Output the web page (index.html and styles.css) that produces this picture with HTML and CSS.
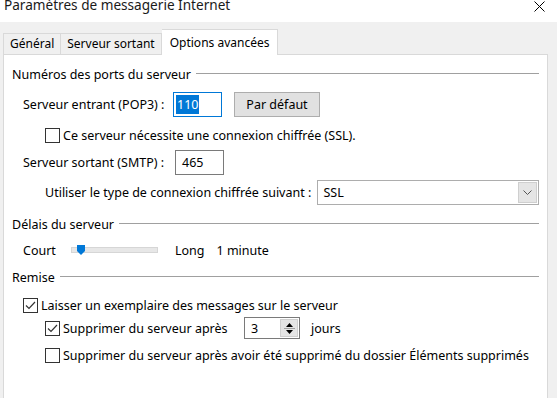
FILE: index.html
```html
<!DOCTYPE html>
<html lang="fr">
<head>
<meta charset="utf-8"/>
<meta content="width=device-width, initial-scale=1.0" name="viewport"/>
<title>Paramètres de messagerie Internet</title>
<link rel="stylesheet" href="styles.css">
</head>
<body>
<div class="titlebar">
  <span class="title">Paramètres de messagerie Internet</span>
  <svg class="close" width="11" height="11" viewBox="0 0 11 11"><path d="M0.5 0.5 L10.5 10.5 M10.5 0.5 L0.5 10.5" stroke="#000" stroke-width="1"/></svg>
</div>
<div class="dialog">
  <div class="tabs">
    <div class="tab first">Général</div>
    <div class="tab">Serveur sortant</div>
    <div class="tab active">Options avancées</div>
  </div>
  <div class="panel">
    <div class="legend legend-ports"><span>Numéros des ports du serveur</span><i></i></div>

    <div class="row row-pop">
      <span class="lbl lbl-pop">Serveur entrant (POP3) :</span>
      <span class="field focused"><span class="sel">110</span></span>
      <button class="btn">Par défaut</button>
    </div>

    <label class="check row-ssl">
      <span class="box"></span>Ce serveur nécessite une connexion chiffrée (SSL).
    </label>

    <div class="row row-smtp">
      <span class="lbl lbl-smtp">Serveur sortant (SMTP) :</span>
      <span class="field">465</span>
    </div>

    <div class="row row-enc">
      <span class="lbl lbl-enc">Utiliser le type de connexion chiffrée suivant :</span>
      <span class="select">
        <span class="select-value">SSL</span>
        <span class="select-btn"><svg width="9" height="5" viewBox="0 0 9 5"><path d="M0.5 0.5 L4.5 4.5 L8.5 0.5" fill="none" stroke="#555" stroke-width="1"/></svg></span>
      </span>
    </div>

    <div class="legend legend-delay"><span>Délais du serveur</span><i></i></div>

    <div class="row row-slider">
      <span class="lbl lbl-court">Court</span>
      <span class="slider">
        <span class="track"></span>
        <svg class="thumb" width="8" height="10" viewBox="0 0 8 10"><path d="M0 0 H8 V6 L4 10 L0 6 Z" fill="#0078d7"/></svg>
      </span>
      <span class="lbl-long">Long</span>
      <span>1 minute</span>
    </div>

    <div class="legend legend-remise"><span>Remise</span><i></i></div>

    <label class="check row-keep">
      <span class="box checked"><svg width="13" height="13" viewBox="0 0 13 13"><path d="M2 6.5 L5 9.5 L11 3" fill="none" stroke="#333" stroke-width="1.2"/></svg></span>Laisser un exemplaire des messages sur le serveur
    </label>

    <div class="check row-delete">
      <span class="box checked"><svg width="13" height="13" viewBox="0 0 13 13"><path d="M2 6.5 L5 9.5 L11 3" fill="none" stroke="#333" stroke-width="1.2"/></svg></span>
      <span class="lbl-delete">Supprimer du serveur après</span>
      <span class="spin">
        <span class="spin-value">3</span>
        <span class="spin-btns">
          <svg width="13" height="17" viewBox="0 0 13 17"><path d="M3 7 L6.5 3 L10 7 Z M3 10 L6.5 14 L10 10 Z" fill="#000"/><path d="M1 8.5 H12" stroke="#a0a0a0" stroke-width="1"/></svg>
        </span>
      </span>
      <span class="lbl-days">jours</span>
    </div>

    <label class="check row-deleted">
      <span class="box"></span>Supprimer du serveur après avoir été supprimé du dossier Éléments supprimés
    </label>
  </div>
</div>
</body>
</html>
```

FILE: styles.css
```css
body {
  font-family: "Noto Sans", "Open Sans", sans-serif;
  font-size: 12.5px;
  margin: 0;
  background: #f0f0f0;
  color: #000;
  overflow: hidden;
}
.titlebar {
  height: 22px;
  background: #fff;
  position: relative;
  overflow: hidden;
}
.title {
  display: block;
  font-size: 13.6px;
  line-height: 18px;
  margin-top: -4px;
  padding-left: 4px;
  color: #1a1a1a;
}
.close {
  position: absolute;
  right: 12px;
  top: 1px;
}
.dialog {
  height: 376px;
  background: #f0f0f0;
  padding-top: 7px;
}
.tabs {
  display: flex;
  align-items: flex-end;
  padding-left: 3px;
  height: 25px;
  font-size: 12px;
}
.tab {
  height: 21px;
  line-height: 20px;
  padding: 0 6px;
  border: 1px solid #d9d9d9;
  border-bottom: none;
  border-left: none;
  box-sizing: border-box;
  background: #f0f0f0;
}
.tab.first {
  border-left: 1px solid #d9d9d9;
}
.tab.active {
  height: 26px;
  line-height: 26px;
  background: #fff;
  padding: 0 8px;
  border-left: none;
  margin-bottom: -1px;
  position: relative;
  z-index: 1;
}
.panel {
  margin-left: 3px;
  width: 545px;
  height: 360px;
  box-sizing: border-box;
  background: #fff;
  border: 1px solid #d9d9d9;
  padding: 9px 8px 0 8px;
}
.legend {
  display: flex;
  align-items: center;
  height: 20px;
}
.legend i {
  flex: 1;
  height: 1px;
  background: #a0a0a0;
  margin-left: 5px;
  margin-top: -1px;
}
.row {
  display: flex;
  align-items: center;
  height: 25px;
  padding-left: 11px;
}
.lbl-pop { width: 150px; }
.lbl-smtp { width: 152px; }
.lbl-enc { width: 295px; padding-left: 22px; box-sizing: border-box; white-space: nowrap; }
.field {
  display: inline-flex;
  align-items: center;
  box-sizing: border-box;
  width: 49px;
  height: 25px;
  border: 1px solid #7a7a7a;
  padding-left: 6px;
  background: #fff;
}
.field.focused {
  border-color: #0078d7;
  padding-left: 2px;
}
.sel {
  background: #0078d7;
  color: #fff;
  line-height: 19px;
  padding: 0 1px;
}
.btn {
  font: inherit;
  margin-left: 12px;
  width: 86px;
  height: 25px;
  background: #e1e1e1;
  border: 1px solid #adadad;
  color: #000;
  padding: 0;
}
.check {
  display: flex;
  align-items: center;
  height: 18px;
  white-space: nowrap;
}
.box {
  width: 15px;
  height: 15px;
  box-sizing: border-box;
  border: 1px solid #333;
  background: #fff;
  margin-right: 3px;
  display: inline-flex;
  align-items: center;
  justify-content: center;
  flex: none;
}
.row-pop { margin-top: 8px; }
.row-ssl { margin-top: 9px; padding-left: 33px; }
.row-smtp { margin-top: 6px; }
.row-enc { margin-top: 5px; }
.select {
  display: flex;
  align-items: center;
  width: 222px;
  height: 25px;
  box-sizing: border-box;
  border: 1px solid #adadad;
  background: #fff;
  padding: 0 1px 0 5px;
}
.select-value { flex: 1; }
.select-btn {
  width: 19px;
  height: 21px;
  background: #e5e5e5;
  border: 1px solid #cfcfcf;
  box-sizing: border-box;
  display: flex;
  align-items: center;
  justify-content: center;
}
.legend-delay { margin-top: 9px; }
.row-slider { margin-top: 6px; height: 20px; }
.lbl-court { width: 48px; }
.slider {
  position: relative;
  width: 87px;
  height: 20px;
  display: flex;
  align-items: center;
}
.track {
  width: 100%;
  height: 4px;
  background: #e7e7e7;
  border: 1px solid #d6d6d6;
}
.thumb {
  position: absolute;
  left: 6px;
  top: 5px;
}
.lbl-long { margin-left: 17px; margin-right: 12px; }
.legend-remise { margin-top: 7px; }
.row-keep { margin-top: 9px; padding-left: 11px; }
.row-delete { margin-top: 3px; padding-left: 33px; height: 22px; }
.lbl-delete { width: 181px; }
.spin {
  display: flex;
  align-items: center;
  width: 56px;
  height: 22px;
  box-sizing: border-box;
  border: 1px solid #7a7a7a;
  padding: 0 1px 0 6px;
}
.spin-value { flex: 1; }
.spin-btns {
  width: 18px;
  height: 18px;
  background: #e5e5e5;
  border: 1px solid #cfcfcf;
  box-sizing: border-box;
  display: flex;
  align-items: center;
  justify-content: center;
}
.lbl-days { margin-left: 11px; }
.row-deleted { margin-top: 7px; padding-left: 33px; }
```
